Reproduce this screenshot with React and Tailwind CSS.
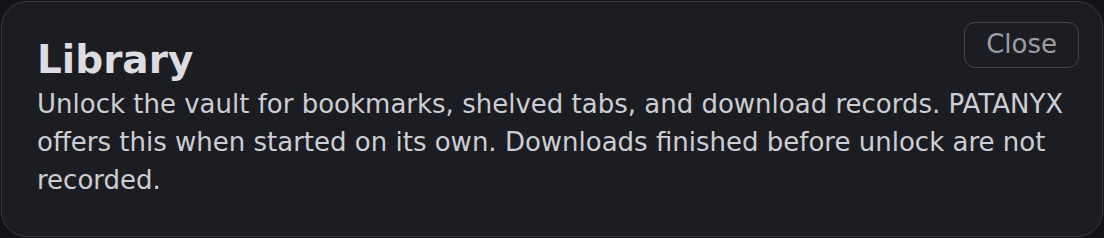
export default function App() {
  return (
    <div className="min-h-[238px] w-[1104px] bg-[#131318] p-px" style={{ fontFamily: '"DejaVu Sans", Verdana, sans-serif' }}>
      <div className="relative h-[236px] rounded-[26px] border border-[#3a3b44] bg-[#1c1d22] pl-[35px] pr-[30px] pt-[35px]">
        <button className="absolute right-[23px] top-[20px] flex h-[46px] items-center rounded-[11px] border border-[#45464e] px-[21px] pb-px text-[26px] text-[#9c9da5]">
          Close
        </button>
        <h2 className="text-[39px] font-bold leading-[46px] text-[#dcdce2]">Library</h2>
        <p className="mt-[2px] text-[26px] leading-[38px] text-[#cdced4]">
          Unlock the vault for bookmarks, shelved tabs, and download records. PATANYX offers this when started on its own. Downloads finished before unlock are not recorded.
        </p>
      </div>
    </div>
  );
}
